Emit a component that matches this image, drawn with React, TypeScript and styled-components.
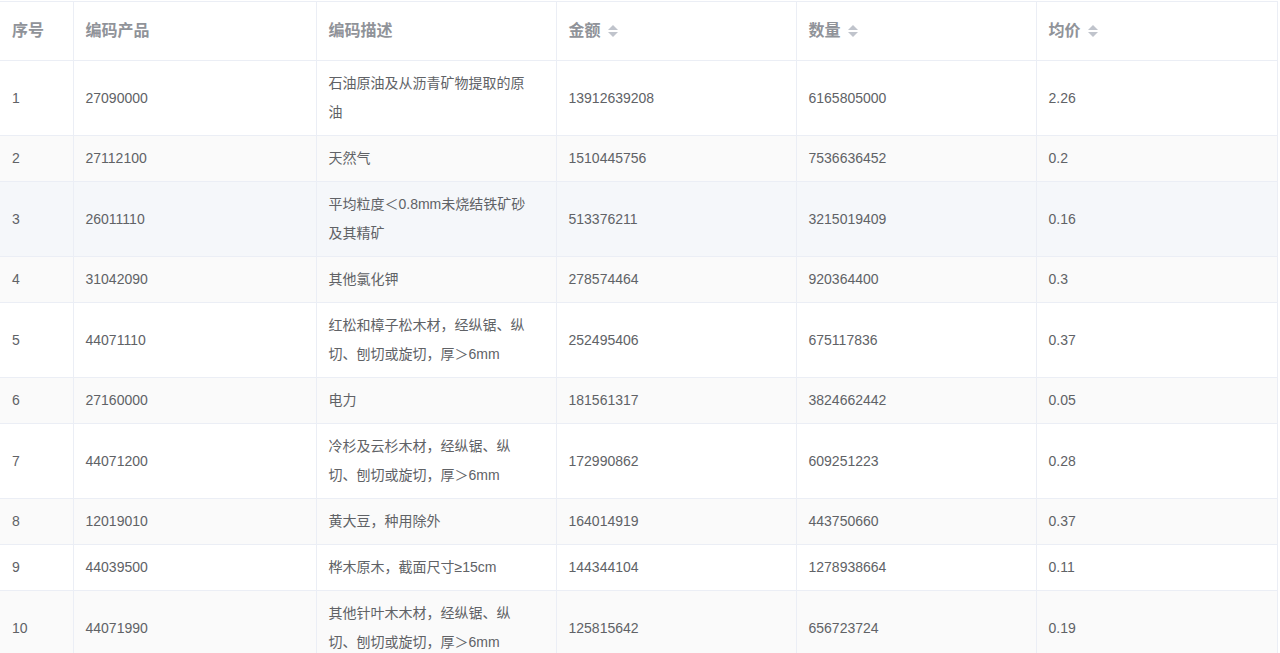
import React from "react";
import styled, { createGlobalStyle } from "styled-components";

const Global = createGlobalStyle`
  body { margin: 0; background: #fff; font-family: "Helvetica Neue", "Liberation Sans", "Noto Sans CJK SC", sans-serif; }
`;

const Table = styled.table`
  width: 1277px;
  border-collapse: collapse;
  table-layout: fixed;
  margin-top: 1px;
  border-top: 1px solid #ebeef5;
  color: #606266;
  font-size: 14px;
`;

const Th = styled.th`
  text-align: left;
  font-weight: 700;
  font-size: 16px;
  color: #909399;
  padding: 15px 12px 15px 12px;
  line-height: 28px;
  border-right: 1px solid #ebeef5;
  border-bottom: 1px solid #ebeef5;
`;

const Tr = styled.tr<{ $bg: string }>`
  background: ${(p) => p.$bg};
`;

const Td = styled.td`
  padding: 8px 12px;
  line-height: 29px;
  border-right: 1px solid #ebeef5;
  border-bottom: 1px solid #ebeef5;
  vertical-align: middle;
`;

const Caret = styled.span`
  display: inline-flex;
  flex-direction: column;
  gap: 2px;
  margin-left: 7px;
  vertical-align: middle;
  position: relative;
  top: -1px;
`;
const Up = styled.i`
  width: 0; height: 0;
  border-left: 5px solid transparent;
  border-right: 5px solid transparent;
  border-bottom: 5px solid #c0c4cc;
`;
const Down = styled(Up)`
  border-bottom: none;
  border-top: 5px solid #c0c4cc;
`;

const Sort = () => (
  <Caret><Up /><Down /></Caret>
);

const rows: [string, string, string[], string, string, string][] = [
  ["1", "27090000", ["石油原油及从沥青矿物提取的原", "油"], "13912639208", "6165805000", "2.26"],
  ["2", "27112100", ["天然气"], "1510445756", "7536636452", "0.2"],
  ["3", "26011110", ["平均粒度＜0.8mm未烧结铁矿砂", "及其精矿"], "513376211", "3215019409", "0.16"],
  ["4", "31042090", ["其他氯化钾"], "278574464", "920364400", "0.3"],
  ["5", "44071110", ["红松和樟子松木材，经纵锯、纵", "切、刨切或旋切，厚＞6mm"], "252495406", "675117836", "0.37"],
  ["6", "27160000", ["电力"], "181561317", "3824662442", "0.05"],
  ["7", "44071200", ["冷杉及云杉木材，经纵锯、纵", "切、刨切或旋切，厚＞6mm"], "172990862", "609251223", "0.28"],
  ["8", "12019010", ["黄大豆，种用除外"], "164014919", "443750660", "0.37"],
  ["9", "44039500", ["桦木原木，截面尺寸≥15cm"], "144344104", "1278938664", "0.11"],
  ["10", "44071990", ["其他针叶木木材，经纵锯、纵", "切、刨切或旋切，厚＞6mm"], "125815642", "656723724", "0.19"],
];

export default function App() {
  return (
    <>
      <Global />
      <Table>
        <colgroup>
          <col style={{ width: 73 }} />
          <col style={{ width: 243 }} />
          <col style={{ width: 240 }} />
          <col style={{ width: 240 }} />
          <col style={{ width: 240 }} />
          <col style={{ width: 241 }} />
        </colgroup>
        <thead>
          <tr>
            <Th>序号</Th>
            <Th>编码产品</Th>
            <Th>编码描述</Th>
            <Th>金额<Sort /></Th>
            <Th>数量<Sort /></Th>
            <Th>均价<Sort /></Th>
          </tr>
        </thead>
        <tbody>
          {rows.map((r, i) => (
            <Tr key={r[0]} $bg={i === 2 ? "#f5f7fa" : i % 2 === 1 ? "#fafafa" : "#fff"}>
              <Td>{r[0]}</Td>
              <Td>{r[1]}</Td>
              <Td>{r[2].map((l, j) => (<React.Fragment key={j}>{j > 0 && <br />}{l}</React.Fragment>))}</Td>
              <Td>{r[3]}</Td>
              <Td>{r[4]}</Td>
              <Td>{r[5]}</Td>
            </Tr>
          ))}
        </tbody>
      </Table>
    </>
  );
}
